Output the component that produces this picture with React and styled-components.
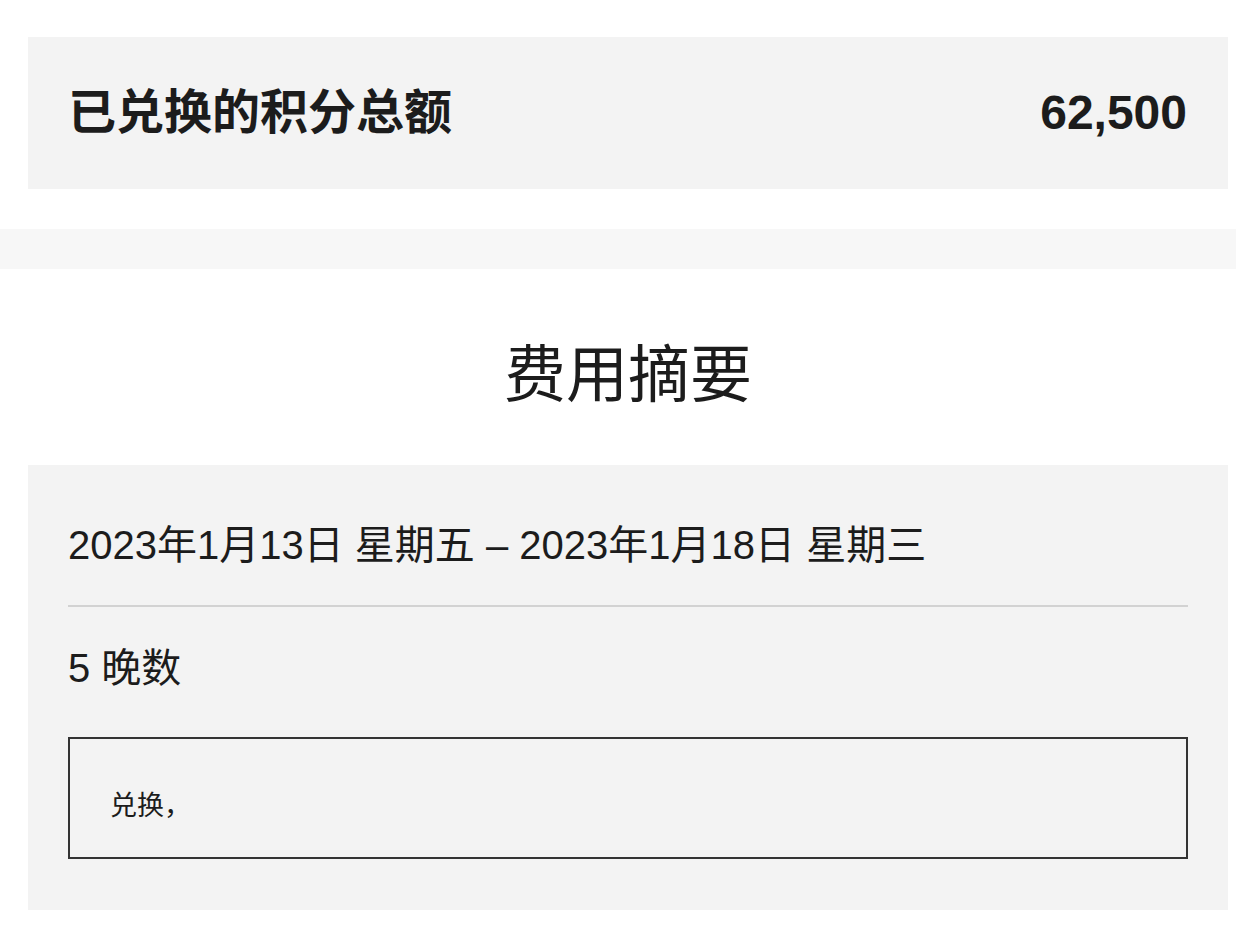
import React from "react";
import styled, { createGlobalStyle } from "styled-components";

const GlobalStyle = createGlobalStyle`
  html, body {
    margin: 0;
    padding: 0;
    background: #fff;
  }
  body {
    font-family: "Liberation Sans", "Noto Sans CJK SC", sans-serif;
    color: #1c1c1c;
  }
`;

const summary = {
  points: "62,500",
  dates: "2023年1月13日 星期五 – 2023年1月18日 星期三",
  nights: "5 晚数",
  note: "兑换，",
};

const App = () => {
  return (
    <Page>
      <GlobalStyle />
      <Section>
        <PointsCard>
          <PointsLabel>已兑换的积分总额</PointsLabel>
          <PointsValue>{summary.points}</PointsValue>
        </PointsCard>
      </Section>
      <Band />
      <Section>
        <Title>费用摘要</Title>
        <SummaryCard>
          <DateRow>{summary.dates}</DateRow>
          <Divider />
          <Nights>{summary.nights}</Nights>
          <NoteBox>{summary.note}</NoteBox>
        </SummaryCard>
      </Section>
    </Page>
  );
};

const Page = styled.div`
  padding-top: 37px;
  padding-bottom: 17px;
`;

const Section = styled.div`
  padding: 0 8px 0 28px;
`;

const PointsCard = styled.div`
  height: 152px;
  background: #f3f3f3;
  display: flex;
  align-items: center;
  justify-content: space-between;
  padding: 0 41px 0 40px;
  box-sizing: border-box;
`;

const PointsLabel = styled.h2`
  margin: 0;
  font-size: 48px;
  line-height: 56px;
  font-weight: 700;
`;

const PointsValue = styled.span`
  font-size: 48px;
  line-height: 56px;
  font-weight: 700;
`;

const Band = styled.div`
  margin-top: 40px;
  height: 40px;
  background: #f7f7f7;
`;

const Title = styled.h1`
  margin: 0;
  padding: 70px 0 52px;
  text-align: center;
  font-size: 62px;
  line-height: 74px;
  font-weight: 400;
`;

const SummaryCard = styled.div`
  background: #f3f3f3;
  padding: 0 40px 51px;
`;

const DateRow = styled.div`
  padding: 56px 0 36px;
  font-size: 40px;
  line-height: 48px;
`;

const Divider = styled.hr`
  margin: 0;
  border: none;
  height: 2px;
  background: #d2d2d2;
`;

const Nights = styled.div`
  padding-top: 37px;
  font-size: 40px;
  line-height: 48px;
`;

const NoteBox = styled.div`
  margin-top: 45px;
  height: 122px;
  box-sizing: border-box;
  border: 2px solid #333;
  padding: 10px 40px 0;
  display: flex;
  align-items: center;
  font-size: 27px;
`;

export default App;
